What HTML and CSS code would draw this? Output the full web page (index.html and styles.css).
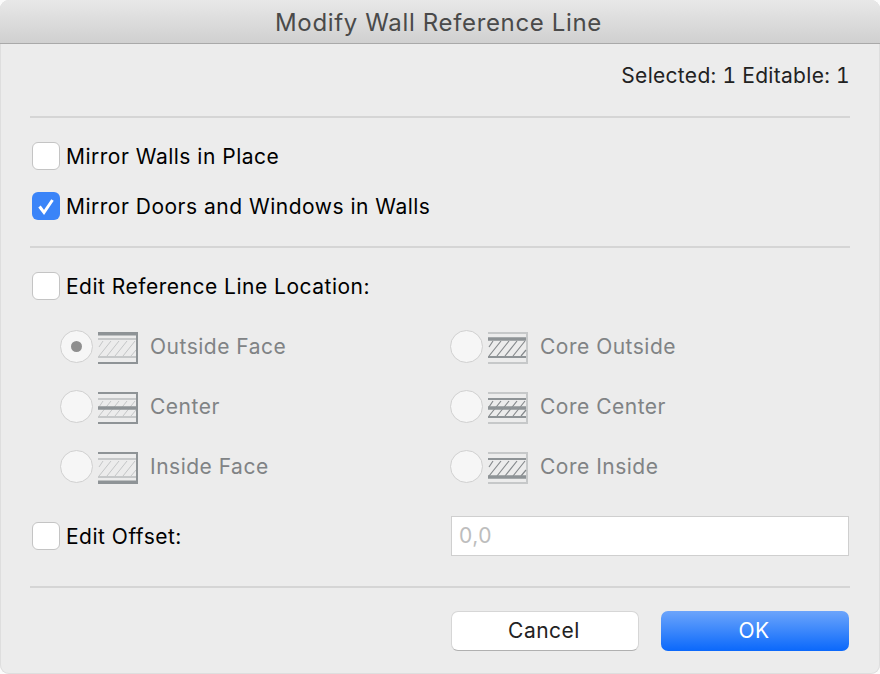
FILE: index.html
```html
<!DOCTYPE html>
<html lang="en">
<head>
<meta charset="utf-8">
<title>Modify Wall Reference Line</title>
<link rel="stylesheet" href="styles.css">
</head>
<body>
<svg class="defs" width="0" height="0" aria-hidden="true">
  <defs>
    <path id="hatch" d="M1 24L13 9M9 24L21 9M17 24L29 9M25 24L37 9M33 24L38 18M1 15L5 9"/>
  </defs>
</svg>
<main class="dialog">
  <header class="titlebar">Modify Wall Reference Line</header>
  <div class="content">
    <p class="status">Selected: 1 Editable: 1</p>
    <hr class="rule rule-a">
    <label class="check check-first"><span class="box"></span>Mirror Walls in Place</label>
    <label class="check check-next"><span class="box checked"><svg viewBox="0 0 28 28" width="28" height="28"><path d="M7.5 14.5L12 20.5L20.5 8" fill="none" stroke="#fff" stroke-width="3"/></svg></span>Mirror Doors and Windows in Walls</label>
    <hr class="rule rule-b">
    <label class="check check-first2"><span class="box"></span>Edit Reference Line Location:</label>
    <div class="options">
      <div class="opt"><span class="radio on"></span>
        <svg class="wall" viewBox="0 0 40 32"><use href="#hatch" class="h-light"/><path class="l-light" d="M0 7H38M0 25H38"/><path class="l-dark" d="M0 31H39V1" stroke-width="2"/><path class="l-dark" d="M0 1.8H40" stroke-width="3.6"/></svg>
        <span class="lbl">Outside Face</span></div>
      <div class="opt"><span class="radio"></span>
        <svg class="wall" viewBox="0 0 40 32"><path class="l-light" d="M0 1H39V31H0" stroke-width="2"/><use href="#hatch" class="h-dark"/><path class="l-dark" d="M0 7H38" stroke-width="3.6"/><path class="l-dark" d="M0 25H38" stroke-width="2"/></svg>
        <span class="lbl">Core Outside</span></div>
      <div class="opt"><span class="radio"></span>
        <svg class="wall" viewBox="0 0 40 32"><use href="#hatch" class="h-light"/><path class="l-light" d="M0 7H38M0 25H38"/><path class="l-dark" d="M0 1H39V31H0" stroke-width="2"/><path class="l-dark" d="M0 16H38" stroke-width="3.6"/></svg>
        <span class="lbl">Center</span></div>
      <div class="opt"><span class="radio"></span>
        <svg class="wall" viewBox="0 0 40 32"><path class="l-light" d="M0 1H39V31H0" stroke-width="2"/><use href="#hatch" class="h-dark"/><path class="l-dark" d="M0 7H38M0 25H38" stroke-width="2"/><path class="l-dark" d="M0 16H38" stroke-width="3.6"/></svg>
        <span class="lbl">Core Center</span></div>
      <div class="opt"><span class="radio"></span>
        <svg class="wall" viewBox="0 0 40 32"><use href="#hatch" class="h-light"/><path class="l-light" d="M0 7H38M0 25H38"/><path class="l-dark" d="M0 1H39V31" stroke-width="2"/><path class="l-dark" d="M0 30.2H40" stroke-width="3.6"/></svg>
        <span class="lbl">Inside Face</span></div>
      <div class="opt"><span class="radio"></span>
        <svg class="wall" viewBox="0 0 40 32"><path class="l-light" d="M0 1H39V31H0" stroke-width="2"/><use href="#hatch" class="h-dark"/><path class="l-dark" d="M0 7H38" stroke-width="2"/><path class="l-dark" d="M0 25H38" stroke-width="3.6"/></svg>
        <span class="lbl">Core Inside</span></div>
    </div>
    <div class="offset-row">
      <label class="check"><span class="box"></span>Edit Offset:</label>
      <div class="field">0,0</div>
    </div>
    <hr class="rule rule-c">
    <div class="actions">
      <button class="btn cancel" type="button">Cancel</button>
      <button class="btn ok" type="button">OK</button>
    </div>
  </div>
</main>
</body>
</html>
```

FILE: styles.css
```css
* { box-sizing: border-box; }
html, body { margin: 0; padding: 0; }
body {
  width: 880px;
  height: 674px;
  overflow: hidden;
  background: #fbfbfb;
  font-family: Inter, "Liberation Sans", sans-serif;
  font-size: 21px;
  letter-spacing: 0.5px;
  color: #000;
}
.defs { display: block; height: 0; }
.dialog {
  width: 880px;
  height: 674px;
  background: #ececec;
  border-radius: 9px;
  overflow: hidden;
  box-shadow: inset 0 0 0 1px #dedede;
}
.titlebar {
  height: 44px;
  padding-top: 1px;
  padding-right: 3px;
  display: flex;
  align-items: center;
  justify-content: center;
  background: linear-gradient(#e8e8e8, #d0d0d0);
  border-bottom: 1px solid #a9a9a9;
  font-size: 24px;
  letter-spacing: 0.65px;
  color: #4a4a4a;
}
.content { padding: 0 30px; }
.status {
  margin: 0;
  height: 24px;
  margin-top: 20px;
  line-height: 24px;
  text-align: right;
  color: #222;
  font-variant-numeric: tabular-nums;
  letter-spacing: 0.3px;
  padding-right: 0;
}
.rule { border: 0; height: 2px; margin: 0; background: #d5d5d5; }
.rule-a { margin-top: 28px; }
.check {
  display: flex;
  align-items: center;
  gap: 6px;
  height: 28px;
  margin-left: 2px;
}
.check-first { margin-top: 24px; }
.check-next { margin-top: 22px; }
.rule-b { margin-top: 26px; }
.check-first2 { margin-top: 24px; }
.box {
  flex: none;
  width: 28px;
  height: 28px;
  border-radius: 6px;
  background: #fff;
  border: 1px solid #c4c4c4;
}
.box.checked {
  border: 0;
  background: #3a84f8;
}
.box svg { display: block; }
.options {
  display: grid;
  grid-template-columns: 390px 1fr;
  grid-auto-rows: 60px;
  padding-left: 30px;
  margin-top: 16px;
}
.opt {
  display: flex;
  align-items: center;
  color: #808385;
}
.radio {
  flex: none;
  width: 33px;
  height: 33px;
  border-radius: 50%;
  background: #f6f6f6;
  border: 1px solid #d0d0d0;
  display: flex;
  align-items: center;
  justify-content: center;
}
.radio.on::after {
  content: "";
  width: 11px;
  height: 11px;
  border-radius: 50%;
  background: #8f8f8f;
}
.wall {
  flex: none;
  width: 40px;
  height: 32px;
  margin-left: 5px;
  margin-top: 3px;
  fill: none;
}
.lbl { margin-left: 12px; }
.l-dark { stroke: #8e9396; fill: none; }
.l-light { stroke: #c6c8c9; stroke-width: 2; fill: none; }
.h-light { stroke: #c4c6c7; stroke-width: 1; fill: none; }
.h-dark { stroke: #85898c; stroke-width: 1.2; fill: none; }
.offset-row {
  display: flex;
  align-items: center;
  justify-content: space-between;
  height: 40px;
  margin-top: 20px;
}
.field {
  width: 398px;
  height: 40px;
  margin-left: auto;
  margin-right: 1px;
  background: #fff;
  border: 1px solid #cfcfcf;
  padding-left: 7px;
  line-height: 38px;
  color: #bdbdbd;
}
.rule-c { margin-top: 30px; }
.actions {
  display: flex;
  justify-content: flex-end;
  gap: 22px;
  margin-top: 23px;
  padding-right: 1px;
}
.btn {
  width: 188px;
  height: 40px;
  border-radius: 7px;
  font: inherit;
  letter-spacing: 0.5px;
  padding: 0 2px 2px 0;
}
.cancel {
  background: #fff;
  border: 1px solid #d6d6d6;
  border-bottom-color: #b0b0b0;
  color: #222;
}
.ok {
  border: 0;
  color: #fff;
  background: linear-gradient(#6ca5fb, #0a68fb);
}
```
